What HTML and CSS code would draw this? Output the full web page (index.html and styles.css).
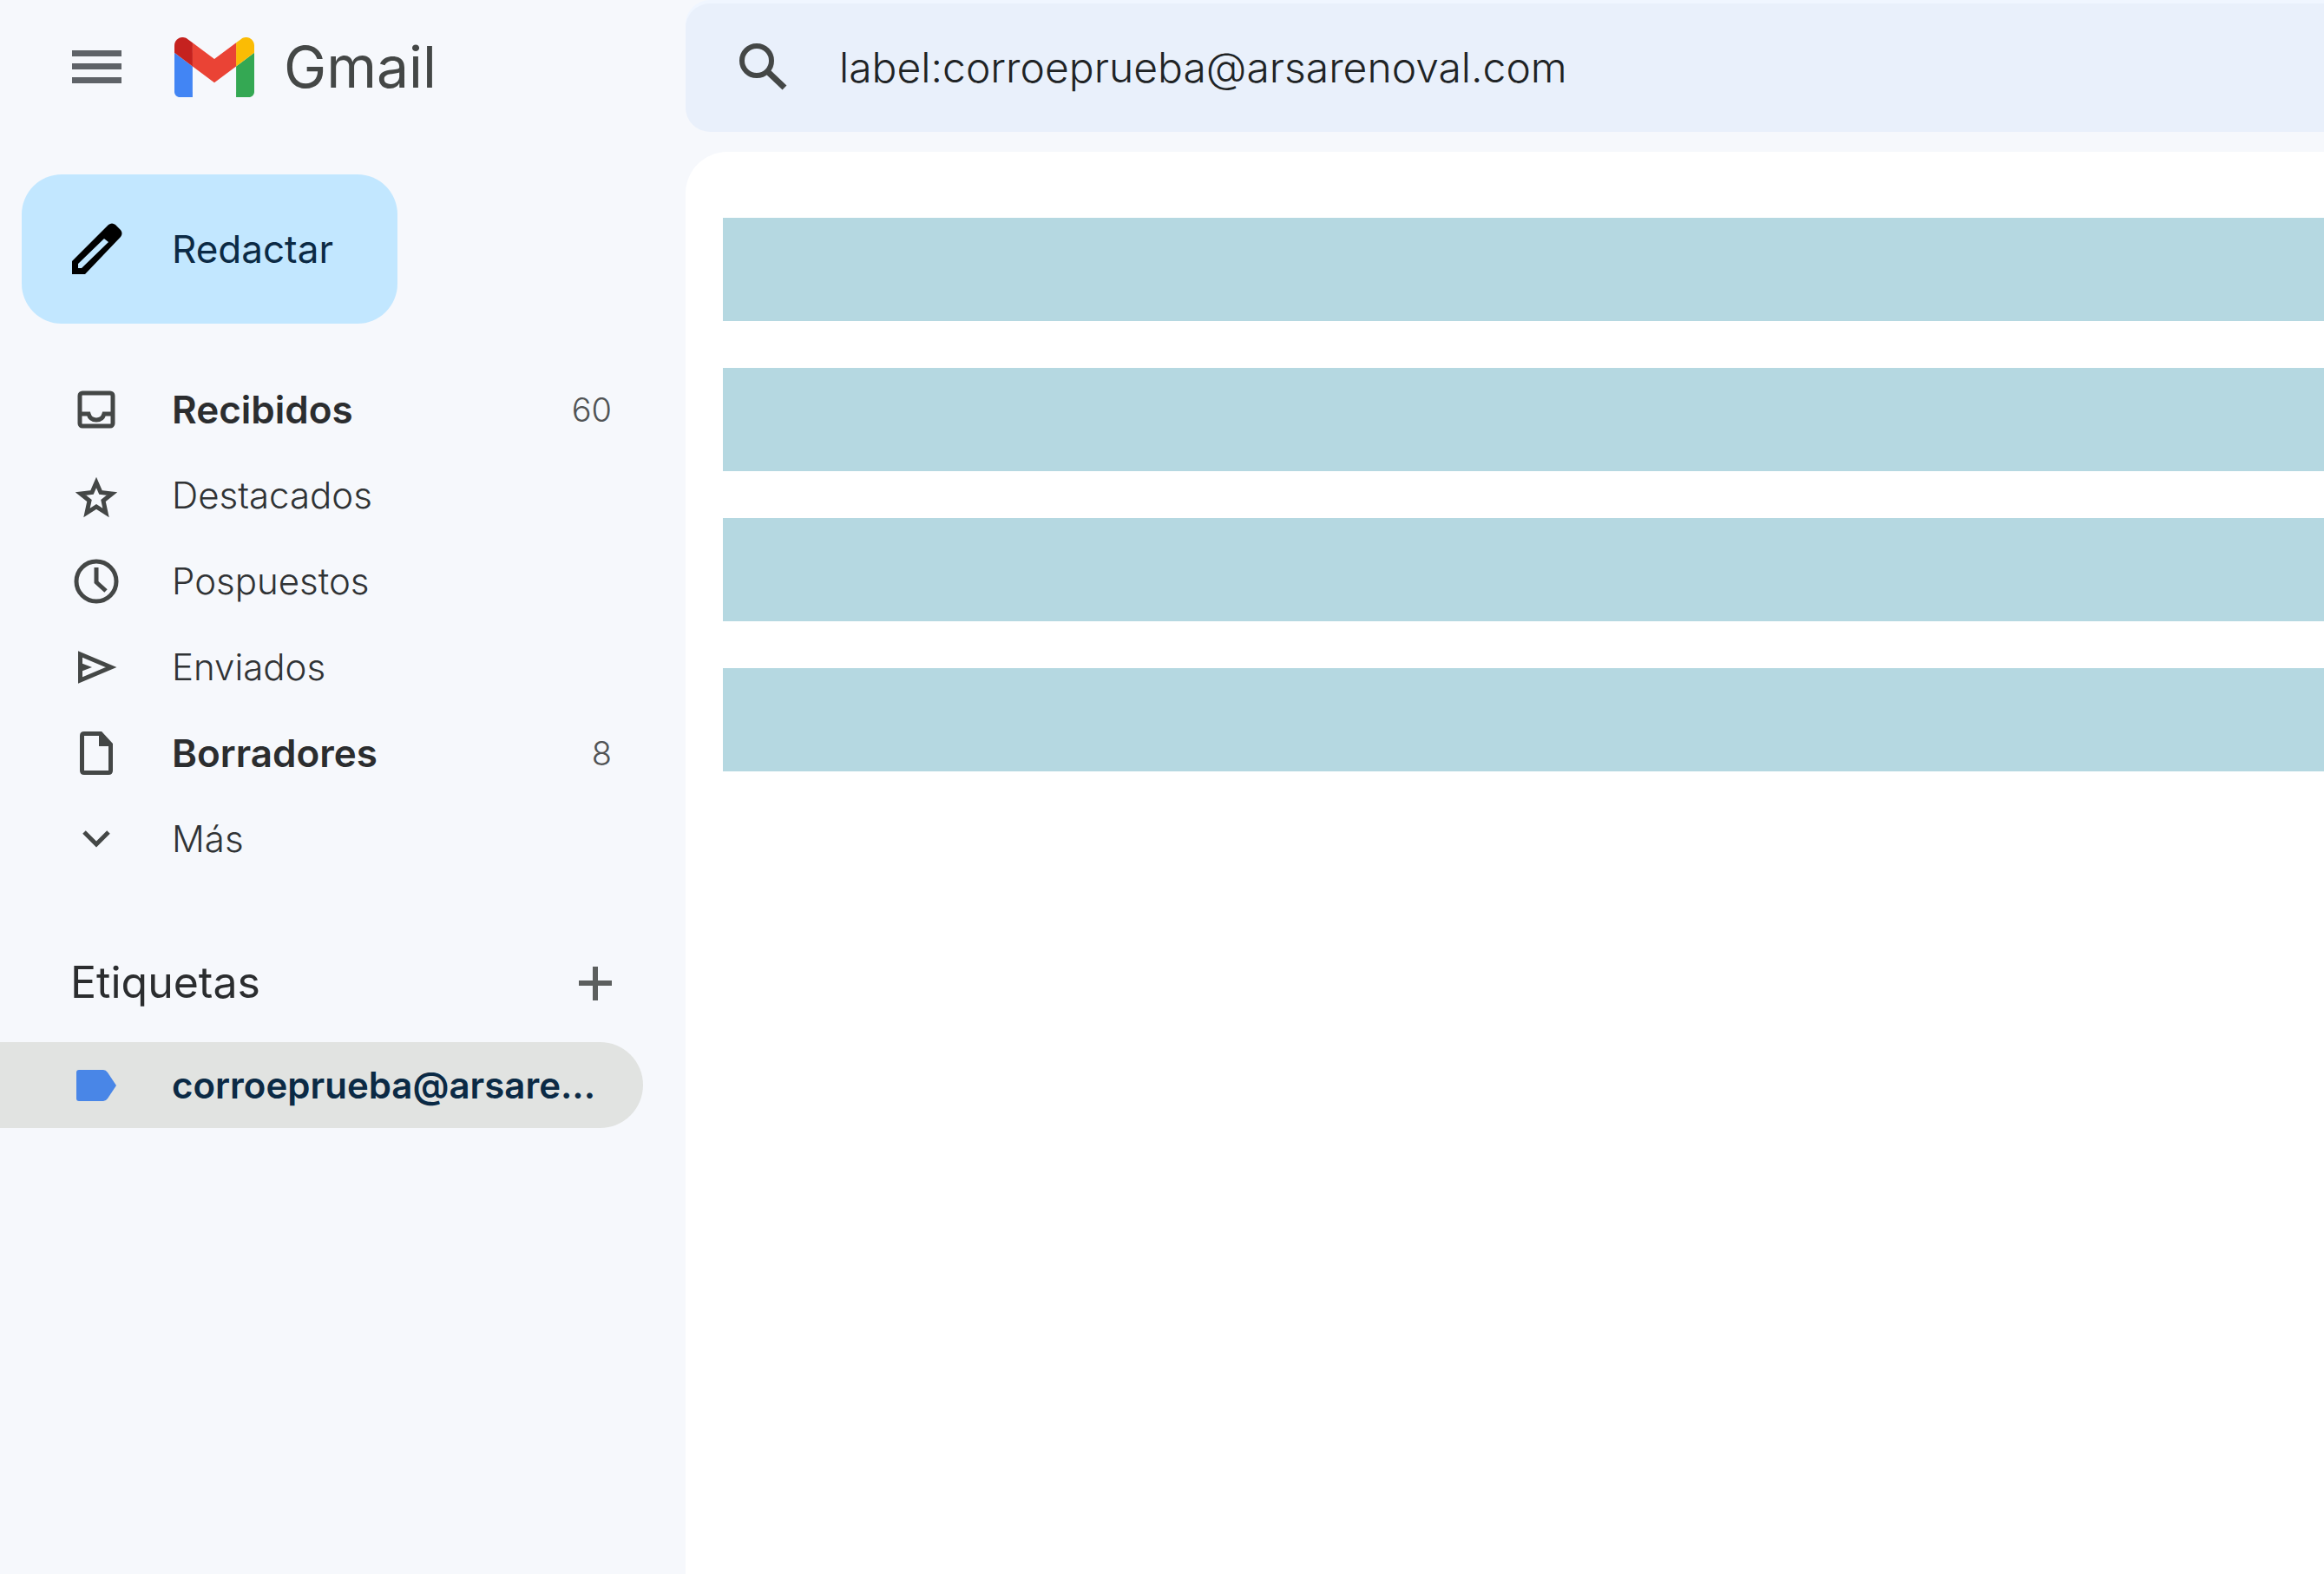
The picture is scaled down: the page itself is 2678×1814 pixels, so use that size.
FILE: index.html
```html
<!DOCTYPE html>
<html lang="es">
<head>
<meta charset="utf-8">
<meta name="viewport" content="width=device-width, initial-scale=1">
<title>Gmail</title>
<link rel="stylesheet" href="styles.css">
</head>
<body>
<div class="app">
  <header class="brand">
    <button class="icon-button" type="button" aria-label="Menú principal">
      <svg class="icon" viewBox="0 0 60 60"><path d="M2 11h57v7H2zM2 26h57v7H2zM2 42h57v7H2z" fill="#5f6368"/></svg>
    </button>
    <a class="logo" href="#">
      <svg class="logo-mark" viewBox="52 42 88 66" aria-hidden="true">
        <path fill="#4285f4" d="M58 108h14V74L52 59v43c0 3.32 2.69 6 6 6"/>
        <path fill="#34a853" d="M120 108h14c3.32 0 6-2.69 6-6V59l-20 15"/>
        <path fill="#fbbc04" d="M120 48v26l20-15v-8c0-7.42-8.47-11.65-14.4-7.2"/>
        <path fill="#ea4335" d="M72 74V48l24 18 24-18v26L96 92"/>
        <path fill="#c5221f" d="M52 51v8l20 15V48l-5.6-4.2c-5.94-4.45-14.4-.22-14.4 7.2"/>
      </svg>
      <span>Gmail</span>
    </a>
  </header>

  <form class="search" role="search">
    <button class="icon-button" type="submit" aria-label="Buscar">
      <svg class="icon" viewBox="0 0 60 60"><circle cx="22" cy="22" r="17" fill="none" stroke="#444746" stroke-width="6"/><path d="M34 34L54 53" fill="none" stroke="#444746" stroke-width="7"/></svg>
    </button>
    <input class="search-input" type="text" aria-label="Buscar correo" value="label:corroeprueba@arsarenoval.com">
  </form>

  <aside class="sidebar">
    <button class="compose" type="button">
      <svg class="icon" viewBox="0 0 60 60"><path fill-rule="evenodd" d="M2 44L44 2Q48-1 52 2L58 8Q61 12 58 16L17 59H2zM9 47V52H13L44 22L39 18z" fill="#000"/></svg>
      <span>Redactar</span>
    </button>

    <nav>
      <ul class="list">
        <li><a class="row unread" href="#">
          <svg class="icon" viewBox="0 0 60 60"><rect x="11" y="11" width="38" height="38" rx="3" fill="none" stroke="#444746" stroke-width="5"/><path d="M11 35h10q2 7 9 7t9-7h10" fill="none" stroke="#444746" stroke-width="5"/></svg>
          <span class="name">Recibidos</span><span class="count">60</span></a></li>
        <li><a class="row" href="#">
          <svg class="icon" viewBox="0 0 60 60"><path d="M30 15L35 26.500L48 28L38 36L41 50L30 43L19 50L22 36L12 28L25 26.500Z" fill="none" stroke="#444746" stroke-width="5"/></svg>
          <span class="name">Destacados</span></a></li>
        <li><a class="row" href="#">
          <svg class="icon" viewBox="0 0 60 60"><circle cx="30" cy="30" r="23" fill="none" stroke="#444746" stroke-width="5"/><path d="M30 14V31L41 41" fill="none" stroke="#444746" stroke-width="5"/></svg>
          <span class="name">Pospuestos</span></a></li>
        <li><a class="row" href="#">
          <svg class="icon" viewBox="0 0 60 60"><path d="M11.500 15V45L47 30Z" fill="none" stroke="#444746" stroke-width="5"/><path d="M12 25L25 30L12 35Z" fill="#444746"/></svg>
          <span class="name">Enviados</span></a></li>
        <li><a class="row unread" href="#">
          <svg class="icon" viewBox="0 0 60 60"><path d="M16 7.500H35L46.500 20V50Q46.500 52.500 44 52.500H16Q13.500 52.500 13.500 50V10Q13.500 7.500 16 7.500Z" fill="none" stroke="#444746" stroke-width="5"/><path d="M33 7V22H48Z" fill="#444746"/></svg>
          <span class="name">Borradores</span><span class="count">8</span></a></li>
        <li><a class="row" href="#">
          <svg class="icon" viewBox="0 0 60 60"><path d="M16 22L30 36L44 22" fill="none" stroke="#444746" stroke-width="5"/></svg>
          <span class="name">Más</span></a></li>
      </ul>
    </nav>

    <div class="labels-head">
      <h2>Etiquetas</h2>
      <button class="icon-button" type="button" aria-label="Crear etiqueta">
        <svg class="icon" viewBox="0 0 60 60"><path d="M30 12V51M11 31H49" fill="none" stroke="#5c5f5e" stroke-width="6"/></svg>
      </button>
    </div>

    <ul class="list">
      <li><a class="row label selected" href="#">
        <svg class="icon" viewBox="0 0 60 60"><path d="M10 12H38Q41 12 43 15L53 30L43 45Q41 48 38 48H10Q7 48 7 45V15Q7 12 10 12Z" fill="#4986e7"/></svg>
        <span class="name">corroeprueba@arsare...</span></a></li>
    </ul>
  </aside>

  <main class="panel">
    <div class="message"></div>
    <div class="message"></div>
    <div class="message"></div>
    <div class="message"></div>
  </main>
</div>
</body>
</html>
```
FILE: styles.css
```css
* {
  box-sizing: border-box;
}

body {
  margin: 0;
  background: #f6f8fc;
  color: #444746;
  font-family: Inter, Roboto, sans-serif;
  font-size: 42px;
  line-height: 56px;
}

button {
  border: 0;
  padding: 0;
  background: none;
  color: inherit;
  font: inherit;
  cursor: pointer;
}

a {
  color: inherit;
  text-decoration: none;
}

.app {
  display: grid;
  grid-template-columns: 790px minmax(0, 1fr);
  grid-template-rows: auto 1fr;
  min-height: 100vh;
}

.icon {
  display: block;
  flex: none;
  width: 60px;
  height: 60px;
}

.icon-button {
  flex: none;
}

.brand {
  display: flex;
  align-items: center;
  gap: 60px;
  height: 154px;
  padding-left: 81px;
}

.logo {
  display: flex;
  align-items: center;
  gap: 34px;
  font-size: 66px;
  line-height: 80px;
}

.logo-mark {
  width: 92px;
  height: 69px;
}

.search {
  display: flex;
  align-items: center;
  gap: 57px;
  height: 148px;
  margin: 4px 0 23px;
  padding-left: 60px;
  border-radius: 28px 0 0 28px;
  background: #e9f0fb;
  box-shadow: 0 -4px #f0f6ff;
}

.search-input {
  flex: 1;
  min-width: 0;
  border: 0;
  padding: 0;
  outline: 0;
  background: none;
  color: #202325;
  font: inherit;
  font-size: 48px;
  font-weight: 300;
  line-height: 64px;
}

.sidebar {
  padding-top: 26px;
}

.compose {
  display: flex;
  align-items: center;
  gap: 57px;
  width: 433px;
  height: 172px;
  margin-left: 25px;
  padding-left: 56px;
  border-radius: 46px;
  background: #c2e7ff;
  color: #0b2a45;
  font-size: 44px;
  font-weight: 400;
}

.list {
  margin: 0;
  padding: 0;
  list-style: none;
}

nav {
  margin-top: 49px;
}

.row {
  display: flex;
  align-items: center;
  gap: 57px;
  height: 99px;
  margin-right: 49px;
  padding: 0 36px 0 81px;
  border-radius: 0 50px 50px 0;
  color: #303335;
  font-weight: 300;
}

.name {
  flex: 1;
  white-space: nowrap;
}

.unread .name {
  color: #2b2d2f;
  font-size: 44px;
  font-weight: 600;
}

.count {
  color: #505354;
  font-size: 38px;
}

.labels-head {
  display: flex;
  align-items: center;
  justify-content: space-between;
  height: 116px;
  margin-top: 58px;
  padding: 0 74px 0 81px;
}

.labels-head h2 {
  margin: 0;
  color: #2b2d2f;
  font-size: 50px;
  font-weight: 400;
  line-height: 64px;
}

.label {
  margin-top: 11px;
}

.selected {
  background: #e1e3e1;
  color: #0b2a45;
  font-weight: 600;
}

.panel {
  display: flex;
  flex-direction: column;
  gap: 54px;
  padding: 76px 0 76px 43px;
  border-top-left-radius: 48px;
  background: #fff;
}

.message {
  height: 119px;
  background: #b5d8e1;
}
```
